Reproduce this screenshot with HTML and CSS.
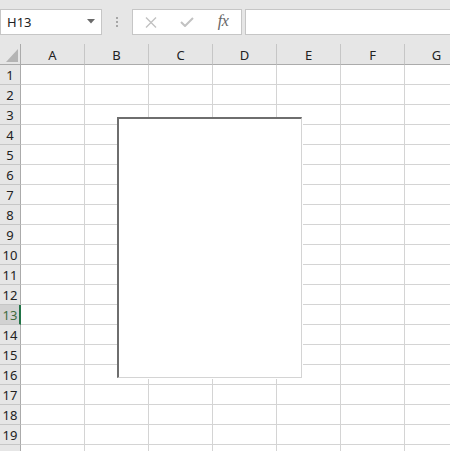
FILE: index.html
```html
<!DOCTYPE html>
<html>
<head>
<meta charset="utf-8">
<link rel="stylesheet" href="styles.css">
</head>
<body>
<div class="app">
  <div class="toolbar">
    <div class="namebox">
      <span class="name">H13</span>
      <svg class="arrow" width="8" height="5" viewBox="0 0 8 5"><path d="M0 0H8L4 4.5Z" fill="#6a6a6a"/></svg>
    </div>
    <div class="dots"><i></i><i></i><i></i></div>
    <div class="fbtns">
      <span class="slot"><svg width="12" height="11" viewBox="0 0 12 11"><path d="M1 0.5L11 10.5M11 0.5L1 10.5" stroke="#c2c2c2" stroke-width="1.4" fill="none"/></svg></span>
      <span class="slot"><svg width="14" height="10" viewBox="0 0 14 10"><path d="M1 5L5 9L13 1" stroke="#c2c2c2" stroke-width="2" fill="none"/></svg></span>
      <span class="slot fx">fx</span>
    </div>
    <div class="finput"></div>
  </div>
  <div class="sheet">
    <div class="grid">
      <div class="corner"><svg width="12" height="13" viewBox="0 0 12 13"><path d="M12 0V13H0Z" fill="#b4b4b4"/></svg></div>
      <div class="ch">A</div><div class="ch">B</div><div class="ch">C</div><div class="ch">D</div><div class="ch">E</div><div class="ch">F</div><div class="ch">G</div>
      <div class="rh">1</div><div class="c"></div><div class="c"></div><div class="c"></div><div class="c"></div><div class="c"></div><div class="c"></div><div class="c"></div>
      <div class="rh">2</div><div class="c"></div><div class="c"></div><div class="c"></div><div class="c"></div><div class="c"></div><div class="c"></div><div class="c"></div>
      <div class="rh">3</div><div class="c"></div><div class="c"></div><div class="c"></div><div class="c"></div><div class="c"></div><div class="c"></div><div class="c"></div>
      <div class="rh">4</div><div class="c"></div><div class="c"></div><div class="c"></div><div class="c"></div><div class="c"></div><div class="c"></div><div class="c"></div>
      <div class="rh">5</div><div class="c"></div><div class="c"></div><div class="c"></div><div class="c"></div><div class="c"></div><div class="c"></div><div class="c"></div>
      <div class="rh">6</div><div class="c"></div><div class="c"></div><div class="c"></div><div class="c"></div><div class="c"></div><div class="c"></div><div class="c"></div>
      <div class="rh">7</div><div class="c"></div><div class="c"></div><div class="c"></div><div class="c"></div><div class="c"></div><div class="c"></div><div class="c"></div>
      <div class="rh">8</div><div class="c"></div><div class="c"></div><div class="c"></div><div class="c"></div><div class="c"></div><div class="c"></div><div class="c"></div>
      <div class="rh">9</div><div class="c"></div><div class="c"></div><div class="c"></div><div class="c"></div><div class="c"></div><div class="c"></div><div class="c"></div>
      <div class="rh">10</div><div class="c"></div><div class="c"></div><div class="c"></div><div class="c"></div><div class="c"></div><div class="c"></div><div class="c"></div>
      <div class="rh">11</div><div class="c"></div><div class="c"></div><div class="c"></div><div class="c"></div><div class="c"></div><div class="c"></div><div class="c"></div>
      <div class="rh">12</div><div class="c"></div><div class="c"></div><div class="c"></div><div class="c"></div><div class="c"></div><div class="c"></div><div class="c"></div>
      <div class="rh sel">13</div><div class="c"></div><div class="c"></div><div class="c"></div><div class="c"></div><div class="c"></div><div class="c"></div><div class="c"></div>
      <div class="rh">14</div><div class="c"></div><div class="c"></div><div class="c"></div><div class="c"></div><div class="c"></div><div class="c"></div><div class="c"></div>
      <div class="rh">15</div><div class="c"></div><div class="c"></div><div class="c"></div><div class="c"></div><div class="c"></div><div class="c"></div><div class="c"></div>
      <div class="rh">16</div><div class="c"></div><div class="c"></div><div class="c"></div><div class="c"></div><div class="c"></div><div class="c"></div><div class="c"></div>
      <div class="rh">17</div><div class="c"></div><div class="c"></div><div class="c"></div><div class="c"></div><div class="c"></div><div class="c"></div><div class="c"></div>
      <div class="rh">18</div><div class="c"></div><div class="c"></div><div class="c"></div><div class="c"></div><div class="c"></div><div class="c"></div><div class="c"></div>
      <div class="rh">19</div><div class="c"></div><div class="c"></div><div class="c"></div><div class="c"></div><div class="c"></div><div class="c"></div><div class="c"></div>
      <div class="rh"></div><div class="c"></div><div class="c"></div><div class="c"></div><div class="c"></div><div class="c"></div><div class="c"></div><div class="c"></div>
    </div>
    <div class="obj"></div>
  </div>
</div>
</body>
</html>
```
FILE: styles.css
```css
html, body {
  margin: 0;
  padding: 0;
  background: #ffffff;
  overflow: hidden;
}
.app {
  width: 450px;
  height: 451px;
  overflow: hidden;
  font-family: "Segoe UI", "Noto Sans", "Open Sans", sans-serif;
  font-size: 13px;
  color: #222;
}
.toolbar {
  height: 44px;
  background: #e6e6e6;
  display: flex;
  align-items: flex-start;
  padding-top: 9px;
  box-sizing: border-box;
}
.namebox {
  width: 102px;
  height: 26px;
  box-sizing: border-box;
  border: 1px solid #c6c6c6;
  background: #fff;
  display: flex;
  align-items: center;
  justify-content: space-between;
  padding: 0 6px 0 6px;
}
.name {
  font-size: 13px;
  color: #222;
  line-height: 24px;
}
.arrow { display: block; margin-top: -1px; }
.dots {
  width: 30px;
  height: 26px;
  display: flex;
  flex-direction: column;
  align-items: center;
  justify-content: center;
  gap: 2px;
}
.dots i {
  display: block;
  width: 2px;
  height: 2px;
  background: #a6a6a6;
}
.fbtns {
  width: 110px;
  height: 26px;
  box-sizing: border-box;
  border: 1px solid #c6c6c6;
  background: #fff;
  display: flex;
  align-items: center;
}
.slot {
  width: 36px;
  height: 24px;
  display: flex;
  align-items: center;
  justify-content: center;
}
.slot svg { display: block; }
.fx {
  font-family: "Liberation Serif", "Times New Roman", serif;
  font-style: italic;
  font-size: 16px;
  color: #666666;
  letter-spacing: -0.5px;
  padding-bottom: 2px;
  box-sizing: border-box;
}
.finput {
  flex: 1;
  margin-left: 3px;
  height: 26px;
  box-sizing: border-box;
  border: 1px solid #c6c6c6;
  border-right: none;
  background: #fff;
}
.sheet {
  position: relative;
}
.grid {
  display: grid;
  grid-template-columns: 21px repeat(7, 64px);
  grid-template-rows: 21px;
  grid-auto-rows: 20px;
}
.corner {
  background: #e6e6e6;
  border-right: 1px solid #ababab;
  border-bottom: 1px solid #ababab;
  box-sizing: border-box;
  display: flex;
  align-items: flex-end;
  justify-content: flex-end;
  padding: 0 2px 2px 0;
}
.corner svg { display: block; }
.ch {
  background: #e6e6e6;
  border-right: 1px solid #c6c6c6;
  border-bottom: 1px solid #ababab;
  box-sizing: border-box;
  display: flex;
  align-items: center;
  justify-content: center;
  font-size: 13px;
  color: #222;
  padding-top: 1px;
}
.rh {
  background: #e6e6e6;
  border-right: 1px solid #ababab;
  border-bottom: 1px solid #c6c6c6;
  box-sizing: border-box;
  display: flex;
  align-items: center;
  justify-content: center;
  font-size: 13px;
  color: #222;
}
.rh.sel {
  background: #d2d2d2;
  border-right: 2px solid #217346;
  color: #3f6b40;
  padding-left: 1px;
}
.c {
  border-right: 1px solid #d4d4d4;
  border-bottom: 1px solid #d4d4d4;
  box-sizing: border-box;
  background: #fff;
}
.obj {
  position: absolute;
  left: 117px;
  top: 73px;
  width: 185px;
  height: 261px;
  box-sizing: border-box;
  background: #fff;
  border-left: 2px solid #6e6e6e;
  border-top: 2px solid #6e6e6e;
  border-right: 1px solid #d4d4d4;
  border-bottom: 1px solid #d4d4d4;
  box-shadow: 1px 1px 0 #fff;
}
```
